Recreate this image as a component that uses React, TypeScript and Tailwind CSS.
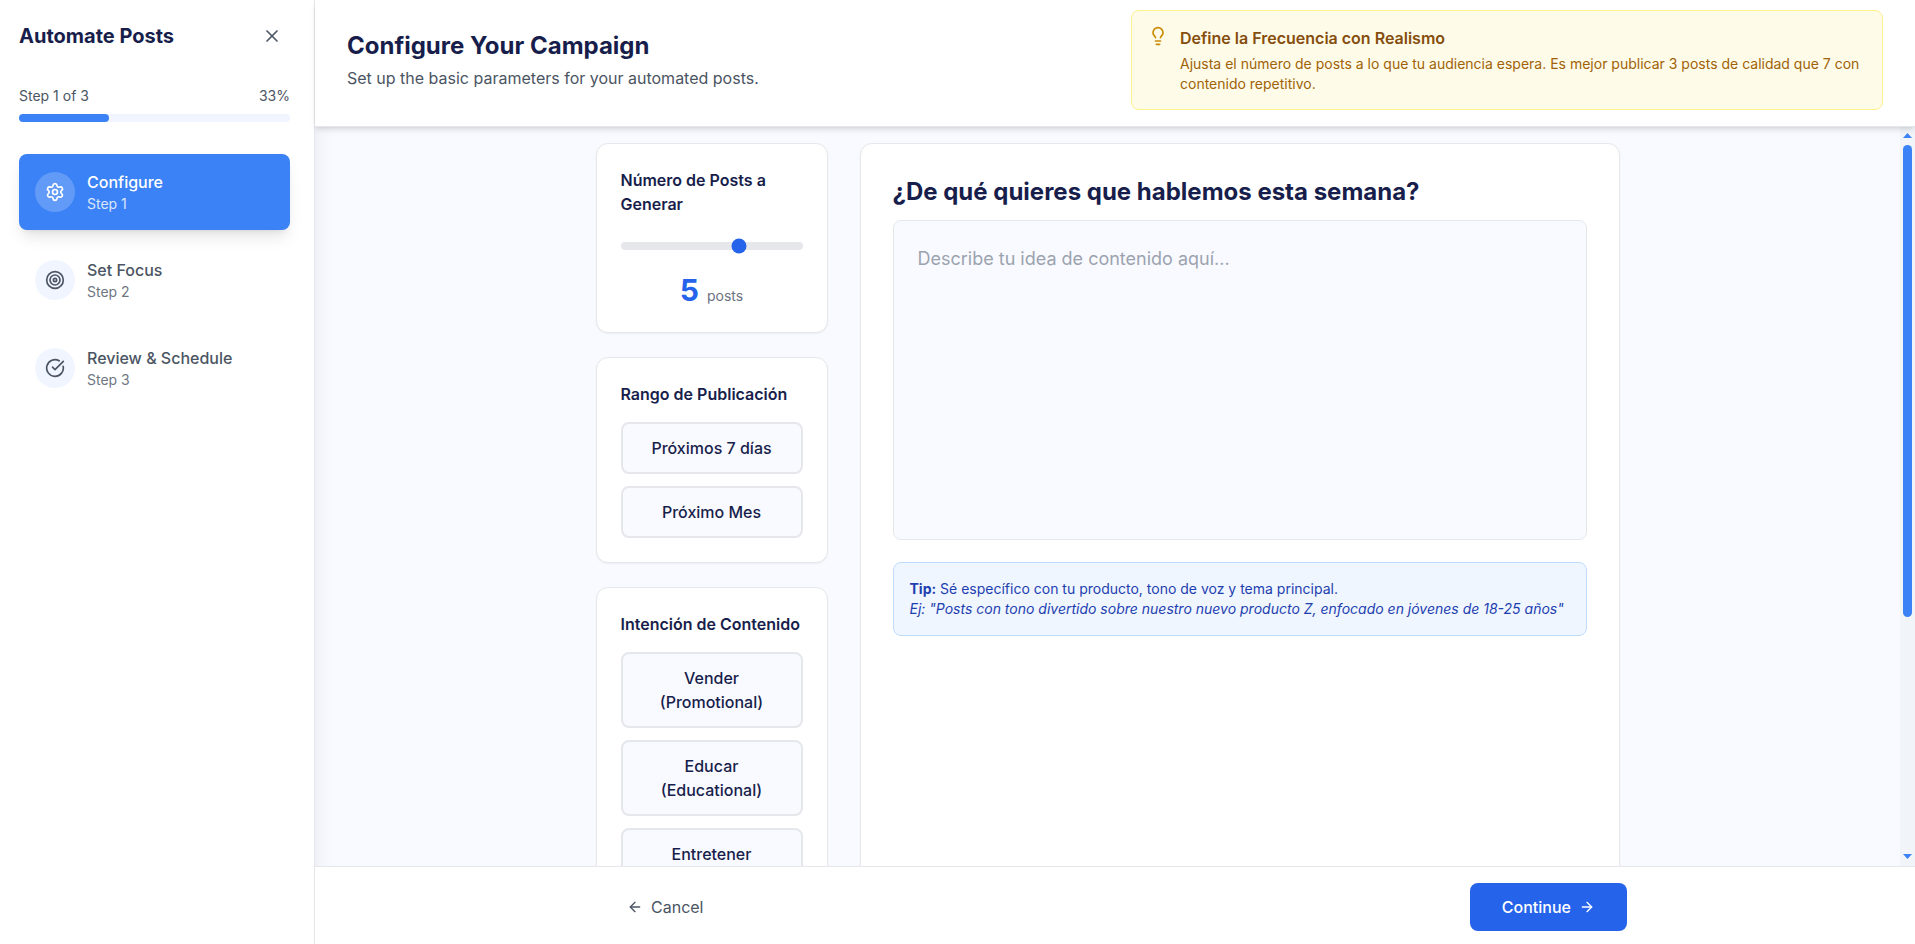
import { useState } from 'react';
import { FiArrowLeft, FiArrowRight } from 'react-icons/fi';
import { CircleCheckBig, Lightbulb, Settings, Target, X } from 'lucide-react';

const steps = [
    { id: 1, title: 'Configure', icon: Settings },
    { id: 2, title: 'Set Focus', icon: Target },
    { id: 3, title: 'Review & Schedule', icon: CircleCheckBig },
];

const rangos = ['Próximos 7 días', 'Próximo Mes'];

const intenciones = [
    'Vender (Promotional)',
    'Educar (Educational)',
    'Entretener (Entertainment)',
];

interface OptionCardProps {
    title: string;
    options: string[];
    selected: string | null;
    onSelect: (option: string) => void;
}

function OptionCard({ title, options, selected, onSelect }: OptionCardProps) {
    return (
        <section className="rounded-xl border border-[#e5e7eb] bg-white p-6 shadow-xs">
            <h3 className="mb-4 font-semibold">{title}</h3>
            <div className="flex flex-col gap-3">
                {options.map((option) => (
                    <button
                        key={option}
                        type="button"
                        onClick={() => onSelect(option)}
                        className={`rounded-lg border-2 px-4 py-3 text-center font-medium ${
                            selected === option ? 'border-[#2563eb] bg-[#eff6ff]' : 'border-[#e5e7eb] bg-[#f9faff]'
                        }`}
                    >
                        {option}
                    </button>
                ))}
            </div>
        </section>
    );
}

function Sidebar({ current }: { current: number }) {
    const percent = (current / steps.length) * 100;

    return (
        <aside className="flex w-[315px] shrink-0 flex-col border-r border-[#e5e7eb] bg-white pt-[18px] pr-6 pl-[19px] shadow-xl">
            <div className="mb-8 flex items-center justify-between">
                <h2 className="text-xl font-bold">Automate Posts</h2>
                <button type="button" aria-label="Close" className="rounded-lg p-2 text-[#4b5563]">
                    <X size={20} />
                </button>
            </div>

            <div className="mb-8">
                <div className="mb-2 flex justify-between text-sm text-[#4b5563]">
                    <span>Step {current} of {steps.length}</span>
                    <span>{Math.round(percent)}%</span>
                </div>
                <div className="h-2 rounded-full bg-[#f1f5ff]">
                    <div className="h-2 rounded-full bg-[#3b82f6]" style={{ width: `${percent}%` }} />
                </div>
            </div>

            <nav className="flex flex-col gap-3">
                {steps.map(({ id, title, icon: Icon }) => {
                    const active = id === current;
                    return (
                        <button
                            key={id}
                            type="button"
                            className={`flex items-center gap-3 rounded-lg p-4 text-left ${
                                active ? 'bg-[#3b82f6] text-white shadow-lg' : 'text-[#4b5563]'
                            }`}
                        >
                            <span
                                className={`flex size-10 items-center justify-center rounded-full ${
                                    active ? 'bg-white/20' : 'bg-[#f1f5ff]'
                                }`}
                            >
                                <Icon size={20} />
                            </span>
                            <span className="flex flex-col">
                                <span className="font-medium">{title}</span>
                                <span className="text-sm opacity-80">Step {id}</span>
                            </span>
                        </button>
                    );
                })}
            </nav>
        </aside>
    );
}

function ScrollRail() {
    return (
        <div aria-hidden="true" className="flex w-[15px] shrink-0 flex-col items-center bg-[#f1f5f9] pt-[6px] pb-[7px]">
            <svg width="9" height="5" viewBox="0 0 9 5" className="fill-[#3b82f6]">
                <path d="M4.5 0 9 5H0z" />
            </svg>
            <div className="mt-[7px] mb-[5px] min-h-0 flex-1">
                <div className="h-[67%] w-[9px] rounded-full bg-[#3b82f6]" />
            </div>
            <svg width="9" height="5" viewBox="0 0 9 5" className="fill-[#3b82f6]">
                <path d="M0 0h9L4.5 5z" />
            </svg>
        </div>
    );
}

export default function App() {
    const [posts, setPosts] = useState(5);
    const [rango, setRango] = useState<string | null>(null);
    const [intencion, setIntencion] = useState<string | null>(null);
    const [idea, setIdea] = useState('');

    return (
        <div className="flex h-screen overflow-hidden bg-[#f9faff] font-[Inter,sans-serif] text-[#181e4b]">
            <Sidebar current={1} />

            <div className="flex min-w-0 flex-1 flex-col">
                <header className="z-10 grid grid-cols-2 items-center gap-8 border-b border-[#e5e7eb] bg-white px-8 pt-[10px] pb-4 shadow-md">
                    <div>
                        <h1 className="mb-1 text-2xl font-bold">Configure Your Campaign</h1>
                        <p className="text-[#4b5563]">Set up the basic parameters for your automated posts.</p>
                    </div>
                    <div className="flex gap-3 rounded-lg border border-[#fef08a] bg-[#fefce8] px-4 py-[15px]">
                        <Lightbulb size={20} className="shrink-0 text-[#ca8a04]" />
                        <div>
                            <h4 className="font-semibold text-[#854d0e]">Define la Frecuencia con Realismo</h4>
                            <p className="mt-1 text-sm text-[#a16207]">
                                Ajusta el número de posts a lo que tu audiencia espera. Es mejor publicar 3 posts de calidad que 7 con contenido repetitivo.
                            </p>
                        </div>
                    </div>
                </header>

                <div className="flex min-h-0 flex-1">
                    <main className="min-w-0 flex-1 overflow-y-auto py-4 [scrollbar-width:none]">
                        <div className="mx-auto grid max-w-5xl grid-cols-4 gap-8">
                            <div className="flex flex-col gap-6">
                                <section className="rounded-xl border border-[#e5e7eb] bg-white p-6 shadow-xs">
                                    <label htmlFor="posts" className="mb-4 block font-semibold">
                                        Número de Posts a Generar
                                    </label>
                                    <div>
                                        <input
                                            id="posts"
                                            type="range"
                                            min={1}
                                            max={7}
                                            value={posts}
                                            onChange={(e) => setPosts(Number(e.target.value))}
                                            className="h-2 w-full cursor-pointer appearance-none rounded-lg bg-[#e5e7eb] accent-[#2563eb]"
                                        />
                                    </div>
                                    <div className="mt-4 text-center">
                                        <span className="text-3xl font-bold text-[#2563eb]">{posts}</span>
                                        <span className="ml-2 text-sm text-[#6b7280]">posts</span>
                                    </div>
                                </section>
                                <OptionCard title="Rango de Publicación" options={rangos} selected={rango} onSelect={setRango} />
                                <OptionCard title="Intención de Contenido" options={intenciones} selected={intencion} onSelect={setIntencion} />
                            </div>

                            <section className="col-span-3 rounded-xl border border-[#e5e7eb] bg-white p-8 shadow-xs">
                                <label htmlFor="idea" className="mb-3 block text-2xl font-bold">
                                    ¿De qué quieres que hablemos esta semana?
                                </label>
                                <div>
                                    <textarea
                                        id="idea"
                                        value={idea}
                                        onChange={(e) => setIdea(e.target.value)}
                                        placeholder="Describe tu idea de contenido aquí..."
                                        className="h-80 w-full resize-none rounded-lg border border-[#e5e7eb] bg-[#f9faff] p-6 text-lg placeholder:text-[#9ca3af]"
                                    />
                                </div>
                                <div className="mt-4 rounded-lg border border-[#bfdbfe] bg-[#eff6ff] p-4 text-sm text-[#1e40af]">
                                    <p>
                                        <strong>Tip:</strong> Sé específico con tu producto, tono de voz y tema principal.
                                    </p>
                                    <p className="italic">
                                        Ej: "Posts con tono divertido sobre nuestro nuevo producto Z, enfocado en jóvenes de 18-25 años"
                                    </p>
                                </div>
                            </section>
                        </div>
                    </main>
                    <ScrollRail />
                </div>

                <footer className="border-t border-[#e5e7eb] bg-white px-8 pt-4 pb-[13px]">
                    <div className="mx-auto flex max-w-5xl items-center justify-between">
                        <button type="button" className="flex items-center gap-2 rounded-lg px-6 py-3 text-[#4b5563]">
                            <FiArrowLeft size={16} />
                            Cancel
                        </button>
                        <button type="button" className="flex items-center gap-2 rounded-lg bg-[#2563eb] px-8 py-3 font-medium text-white">
                            Continue
                            <FiArrowRight size={16} />
                        </button>
                    </div>
                </footer>
            </div>
        </div>
    );
}
